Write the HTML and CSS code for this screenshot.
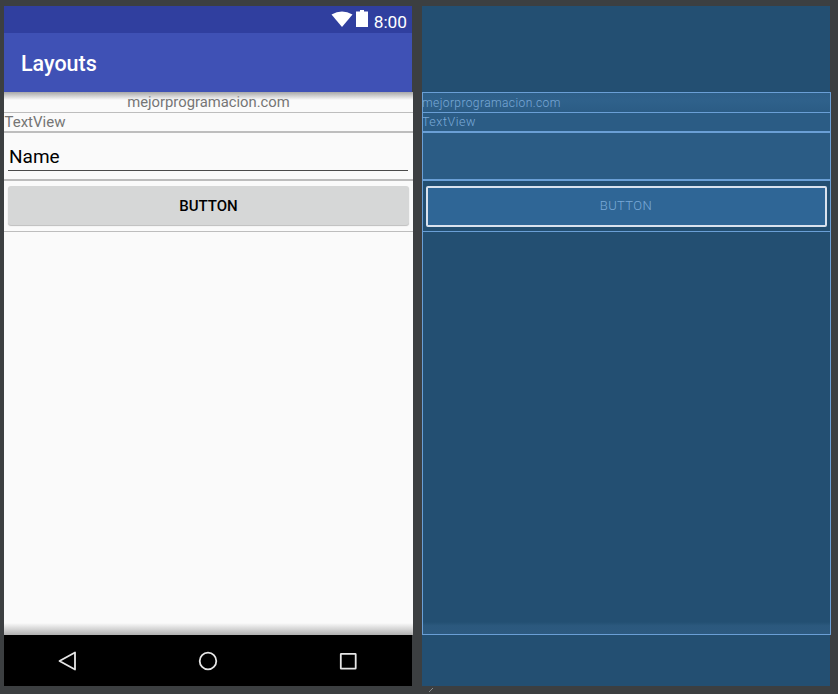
FILE: index.html
```html
<!DOCTYPE html>
<html lang="en">
<head>
<meta charset="utf-8">
<title>Layouts</title>
<link rel="stylesheet" href="styles.css">
</head>
<body>
<main class="stage">
  <section class="device">
    <header class="status">
      <svg class="wifi" width="22" height="16" viewBox="0 0 22 16"><path d="M0.500 3.500Q11 -2.500 21.500 3.500L11 16Z" fill="#fff"/></svg>
      <svg class="battery" width="12" height="17" viewBox="0 0 12 17"><path d="M4 0H8V1.500H12V17H0V1.500H4Z" fill="#fff"/></svg>
      <span class="clock">8:00</span>
    </header>
    <div class="appbar"><span class="appbar-title">Layouts</span></div>
    <div class="content">
      <div class="row row-web">mejorprogramacion.com</div>
      <div class="row row-text">TextView</div>
      <div class="row row-edit"><div class="edit-field">Name</div></div>
      <div class="row row-button"><div class="button">BUTTON</div></div>
      <div class="fill"></div>
    </div>
    <nav class="navbar">
      <svg width="20" height="20" viewBox="0 0 20 20"><path d="M1.500 10L17 1.500V18.500Z" fill="none" stroke="#e6e6e6" stroke-width="1.800" stroke-linejoin="round"/></svg>
      <svg width="20" height="20" viewBox="0 0 20 20"><circle cx="10" cy="10" r="8.300" fill="none" stroke="#e6e6e6" stroke-width="1.800"/></svg>
      <svg width="20" height="20" viewBox="0 0 20 20"><rect x="2.800" y="2.800" width="14.900" height="14.900" fill="none" stroke="#e6e6e6" stroke-width="1.800" rx="0.500"/></svg>
    </nav>
  </section>
  <section class="blueprint">
    <div class="bp-top"></div>
    <div class="bp-content">
      <div class="bp-row bp-web">mejorprogramacion.com</div>
      <div class="bp-row bp-text">TextView</div>
      <div class="bp-row bp-edit"></div>
      <div class="bp-row bp-button-row"><div class="bp-button">BUTTON</div></div>
      <div class="bp-fill"></div>
    </div>
    <div class="bp-bottom"></div>
    <svg class="resize-tick" width="6" height="6" viewBox="0 0 6 6"><path d="M1 5L5 1" stroke="#8a8d8f" stroke-width="1" fill="none"/></svg>
  </section>
</main>
</body>
</html>
```
FILE: styles.css
```css
* { box-sizing: border-box; }
html, body { margin: 0; padding: 0; }
body {
  width: 838px;
  height: 694px;
  background: #3c3f41;
  font-family: Roboto, "Liberation Sans", sans-serif;
  overflow: hidden;
}
.stage {
  display: flex;
  gap: 10px;
  padding: 6px 0 0 4px;
}
.device, .blueprint {
  width: 408px;
  height: 680px;
  display: flex;
  flex-direction: column;
}
.blueprint { position: relative; }
.resize-tick { position: absolute; left: 6px; bottom: -7px; }
.status {
  height: 27px;
  background: #303f9f;
  display: flex;
  align-items: center;
  padding: 0 5px 0 0;
  justify-content: flex-end;
  color: #fff;
}
.wifi { margin-right: 3px; margin-bottom: 2px; }
.battery { margin-right: 6px; margin-bottom: 2px; }
.clock { font-size: 17.300px; line-height: 20px; margin-top: 5px; }
.appbar {
  height: 59px;
  background: #3f51b5;
  display: flex;
  align-items: center;
  padding-left: 17px;
}
.appbar-title { color: #fff; font-size: 21.500px; font-weight: 500; position: relative; top: 1px; }
.content {
  height: 543px;
  margin-right: -1px;
  background: #fafafa;
  display: flex;
  flex-direction: column;
  position: relative;
}
.content::before, .content::after {
  content: "";
  position: absolute;
  left: 0;
  right: 0;
  height: 8px;
}
.content::before { top: 0; background: linear-gradient(#a8a8a8, rgba(250,250,250,0)); }
.content::after { bottom: 0; height: 12px; background: linear-gradient(rgba(250,250,250,0), #b0b0b0); }
.row { border-bottom: 1px solid #bdbdbd; color: #757575; }
.row-web {
  height: 21px;
  text-align: center;
  font-size: 14.800px;
  line-height: 21px;
}
.row-text {
  height: 20px;
  border-bottom-width: 2px;
  font-size: 15px;
  line-height: 18px;
  padding-left: 0.500px;
}
.row-edit {
  height: 48px;
  border-bottom-width: 2px;
  padding: 0 5px 0 4px;
}
.edit-field {
  height: 38px;
  border-bottom: 1px solid #4a4a4a;
  color: #000;
  font-size: 19px;
  line-height: 47px;
  padding-left: 1px;
}
.row-button { height: 51px; padding: 5px 4px 0 4px; }
.button {
  height: 39px;
  background: #d6d7d7;
  border-radius: 3px;
  box-shadow: 0 1px 1px #bdbdbd;
  color: #000;
  font-size: 15px;
  font-weight: 500;
  line-height: 40px;
  text-align: center;
}
.fill { flex: 1; }
.navbar {
  height: 51px;
  background: #000;
  display: flex;
  align-items: center;
  justify-content: space-between;
  padding: 0 54px;
}
.blueprint { background: #234f72; }
.bp-top { height: 86px; }
.bp-content {
  height: 543px;
  margin-right: -1px;
  border: 1px solid #6a9fd6;
  display: flex;
  flex-direction: column;
  position: relative;
}
.bp-content::after {
  content: "";
  position: absolute;
  left: 0;
  right: 0;
  bottom: 0;
  height: 12px;
  background: linear-gradient(#26527500, #2b587d 30%, #2d5a80);
}
.bp-row { background: #2b5c85; border-bottom: 1px solid #6a9fd6; color: #79a9d8; font-weight: 300; }
.bp-web {
  height: 20px;
  background: linear-gradient(#2e5f88, #2f618b 40%, #2b5c85);
  font-size: 12px;
  line-height: 20px;
  letter-spacing: 0.400px;
  text-indent: -1px;
}
.bp-text {
  height: 20px;
  border-bottom-width: 2px;
  font-size: 12.500px;
  line-height: 18px;
  letter-spacing: 0.500px;
  text-indent: -1px;
}
.bp-edit { height: 48px; border-bottom-width: 2px; }
.bp-button-row { height: 51px; padding: 5px 3px 0 3px; background: #234f72; }
.bp-button {
  height: 41px;
  background: #2f6696;
  border: 2px solid #d9e2ee;
  border-radius: 2px;
  font-size: 13px;
  line-height: 35px;
  text-align: center;
  letter-spacing: 0.400px;
  padding-right: 1px;
}
.bp-fill { flex: 1; }
.bp-bottom { flex: 1; }
```
